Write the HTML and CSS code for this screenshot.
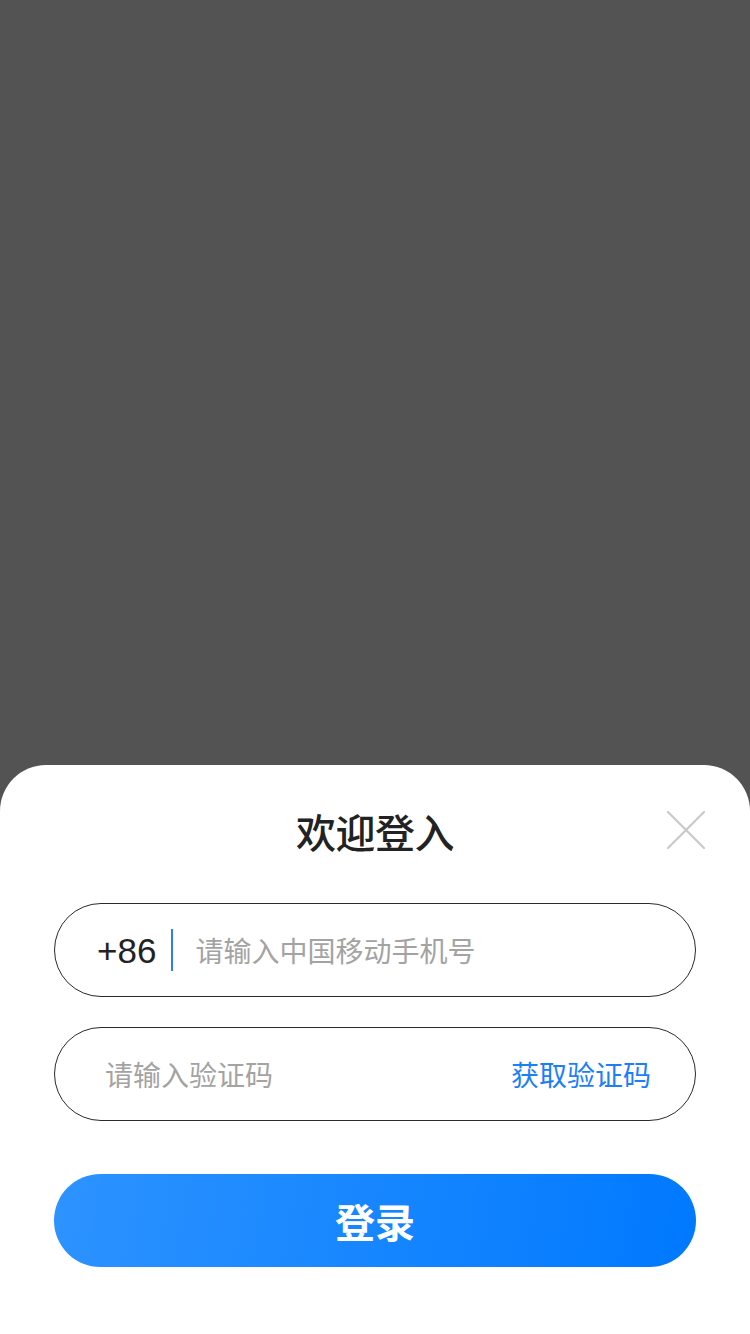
FILE: index.html
```html
<!DOCTYPE html>
<html lang="zh-CN">
<head>
<meta charset="utf-8">
<meta name="viewport" content="width=750">
<title>欢迎登入</title>
<link rel="stylesheet" href="styles.css">
</head>
<body>
<div class="page">
  <div class="mask"></div>
  <section class="sheet">
    <header class="sheet-head">
      <h1 class="title">欢迎登入</h1>
      <button class="close" type="button" aria-label="关闭">
        <svg width="38" height="38" viewBox="0 0 38 38" aria-hidden="true">
          <path d="M1 1 L37 37 M37 1 L1 37" stroke="#c9c9c9" stroke-width="2.2" stroke-linecap="round" fill="none"/>
        </svg>
      </button>
    </header>
    <form class="form">
      <div class="field">
        <span class="prefix">+86</span>
        <span class="divider"></span>
        <input class="input" type="tel" placeholder="请输入中国移动手机号">
      </div>
      <div class="field field-code">
        <input class="input" type="text" placeholder="请输入验证码">
        <span class="get-code">获取验证码</span>
      </div>
      <button class="submit" type="button">登录</button>
    </form>
  </section>
</div>
</body>
</html>
```
FILE: styles.css
```css
* { box-sizing: border-box; }
html, body { margin: 0; padding: 0; }
body {
  width: 750px;
  height: 1334px;
  background: #535353;
  font-family: "Noto Sans CJK SC", "Noto Sans", sans-serif;
  overflow: hidden;
}
.page {
  display: flex;
  flex-direction: column;
  height: 1334px;
}
.mask { flex: 1; }
.sheet {
  height: 569px;
  background: #ffffff;
  border-radius: 46px 46px 0 0;
  display: flex;
  flex-direction: column;
}
.sheet-head {
  display: grid;
  grid-template-columns: 1fr auto 1fr;
  align-items: center;
  padding-top: 40px;
  height: 92px;
}
.title {
  grid-column: 2;
  margin: 0;
  font-size: 40px;
  line-height: 52px;
  font-weight: 500;
  color: #222222;
  letter-spacing: -0.5px;
}
.close {
  grid-column: 3;
  justify-self: end;
  margin-right: 45px;
  margin-top: -2px;
  width: 38px;
  height: 38px;
  padding: 0;
  border: none;
  background: none;
  display: flex;
}
.form {
  display: flex;
  flex-direction: column;
  padding: 46px 54px 0;
}
.field {
  height: 94px;
  border: 1px solid #2a2a2a;
  border-radius: 47px;
  display: flex;
  align-items: center;
  padding: 0 44px 0 42px;
}
.field + .field { margin-top: 30px; }
.prefix {
  font-family: "Liberation Sans", Arial, sans-serif;
  font-size: 35px;
  color: #222222;
  line-height: 1;
}
.divider {
  width: 2px;
  height: 42px;
  background: #2f7df6;
  margin: 0 22px 0 15px;
}
.input {
  flex: 1;
  min-width: 0;
  border: none;
  outline: none;
  background: transparent;
  padding: 0;
  font-family: "Noto Sans CJK SC", sans-serif;
  font-size: 28px;
  color: #222222;
}
.input::placeholder { color: #a3a3a3; }
.field-code { padding-left: 50px; }
.get-code {
  font-size: 28px;
  color: #1b7ff7;
  white-space: nowrap;
}
.submit {
  margin-top: 53px;
  height: 93px;
  border: none;
  border-radius: 47px;
  background: linear-gradient(100deg, #2d93ff 0%, #0079ff 100%);
  color: #ffffff;
  font-family: "Noto Sans CJK SC", sans-serif;
  font-size: 40px;
  font-weight: 700;
  padding: 0;
}
```
